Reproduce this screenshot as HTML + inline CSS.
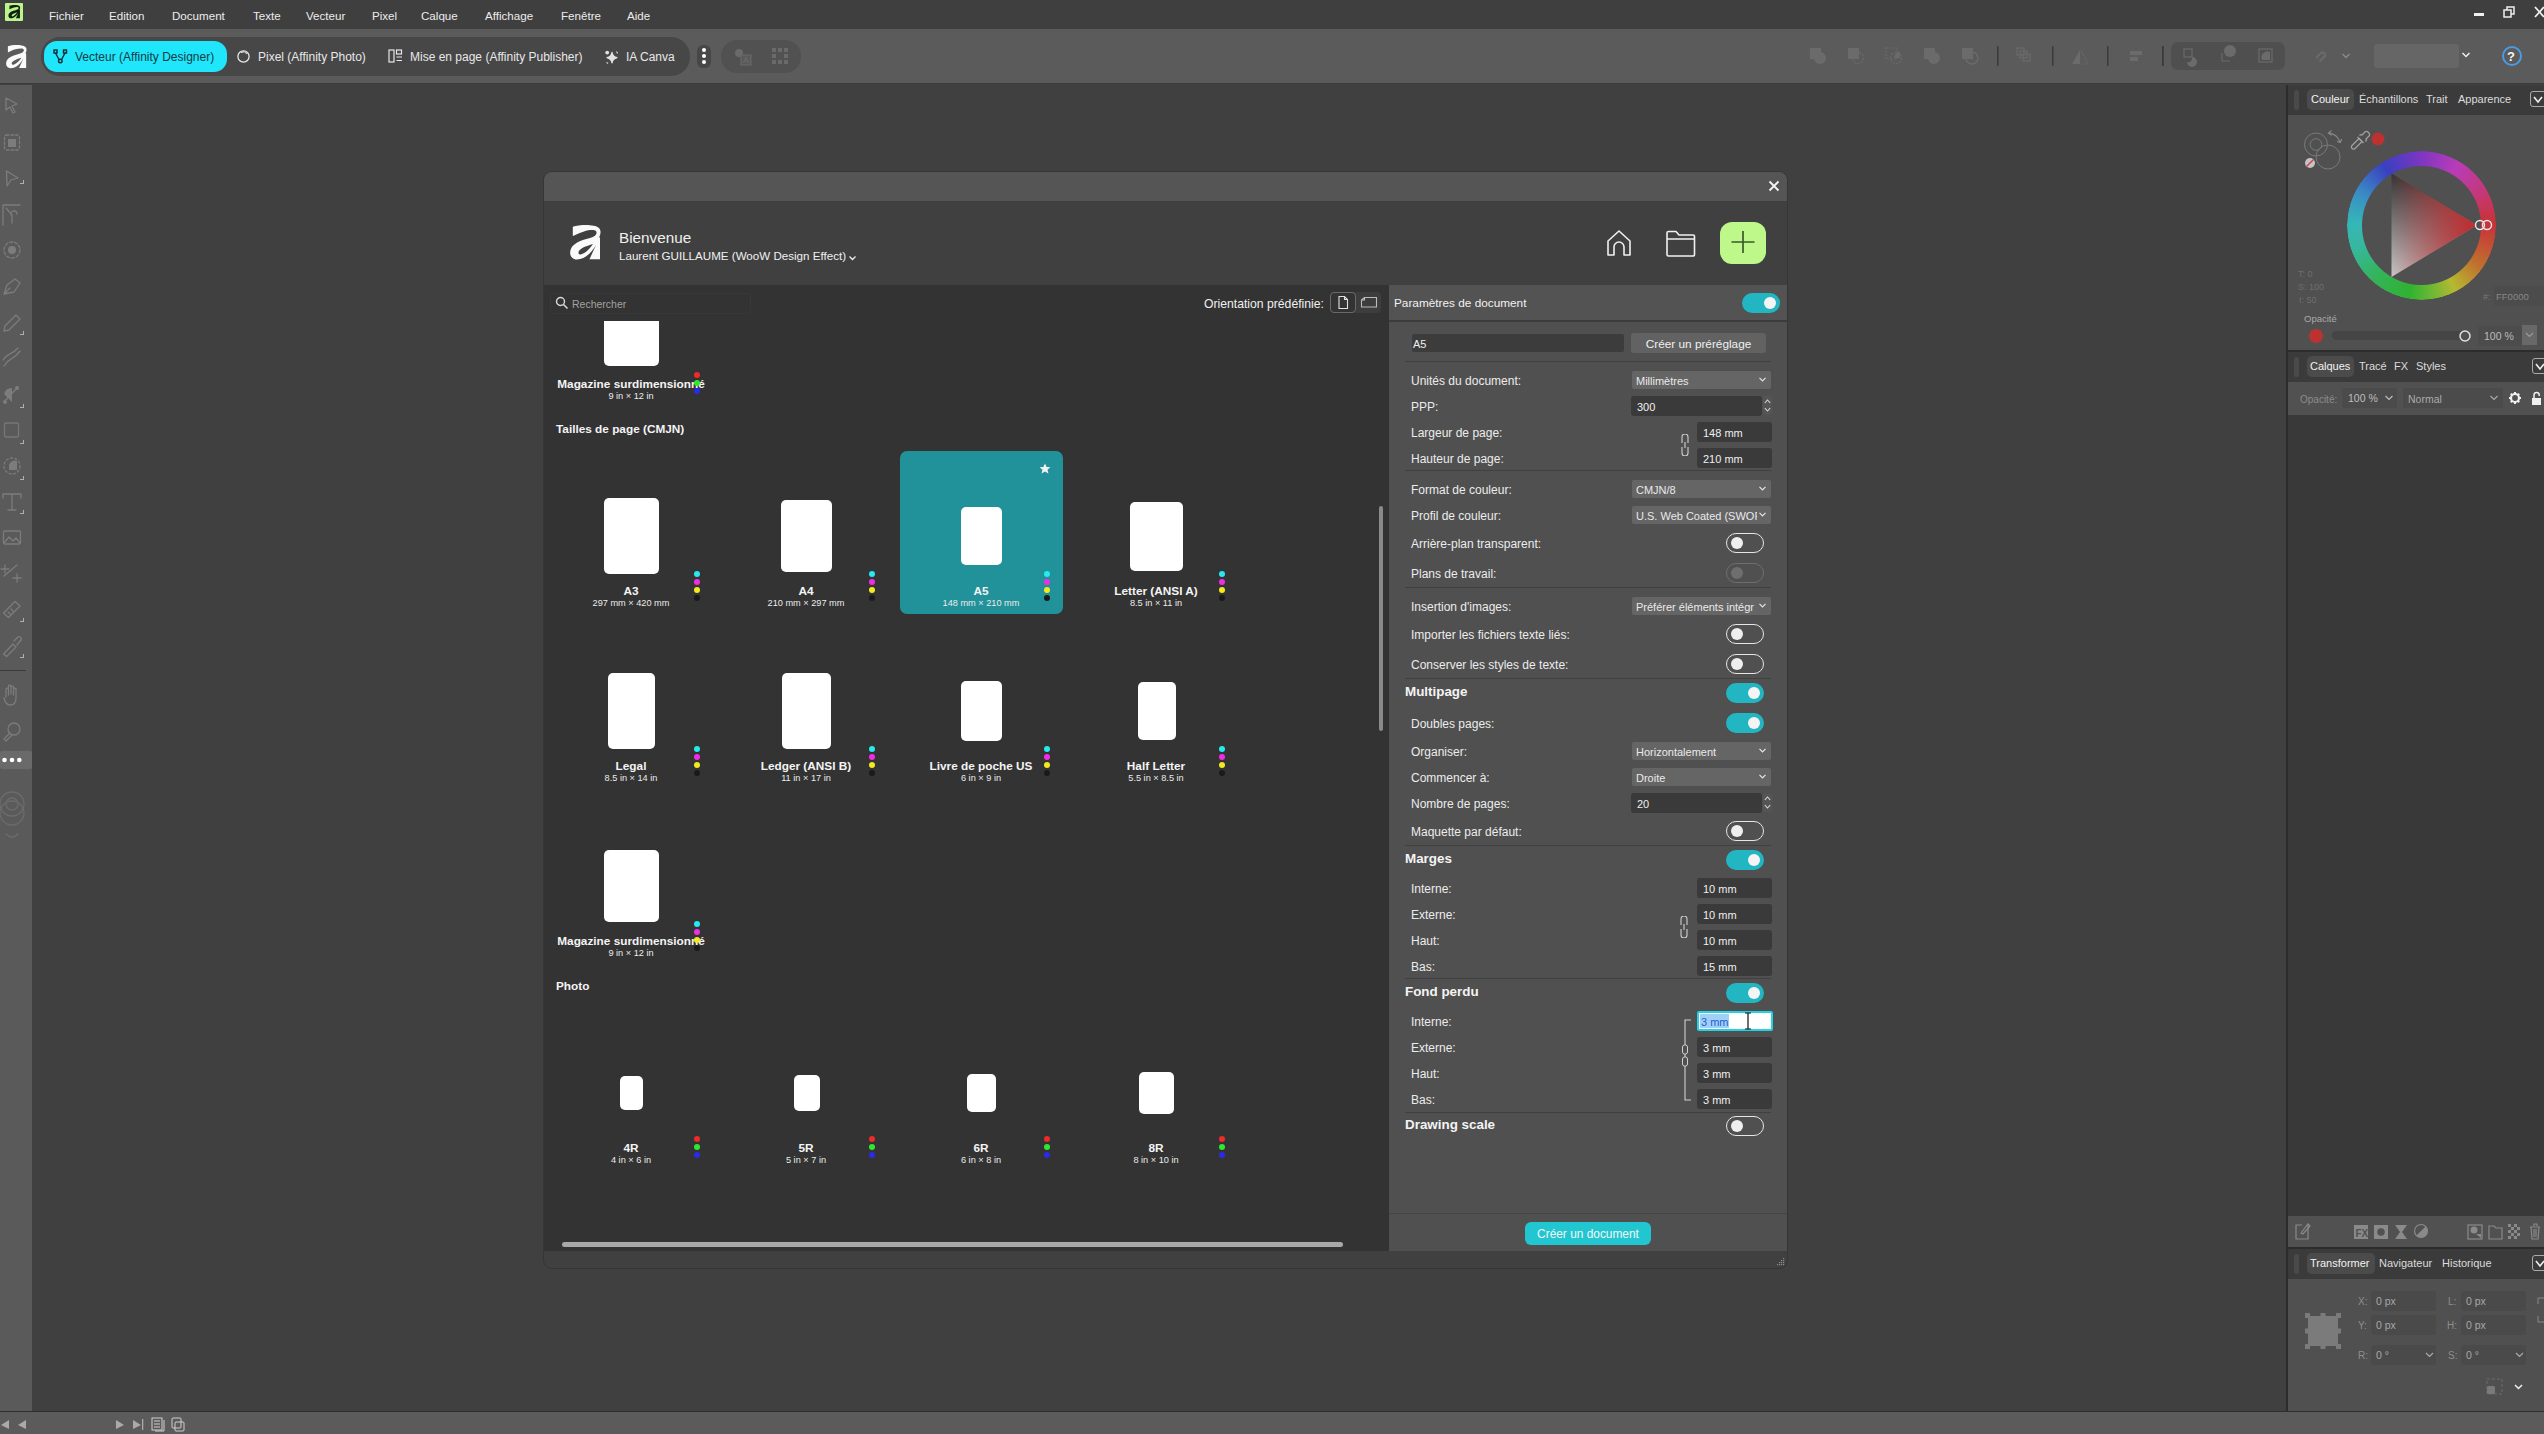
<!DOCTYPE html>
<html><head><meta charset="utf-8">
<style>
*{box-sizing:border-box;margin:0;padding:0}
html,body{width:2544px;height:1434px;overflow:hidden;background:#404040;font-family:"Liberation Sans",sans-serif;color:#e6e6e6}
.a{position:absolute}
.t{position:absolute;white-space:nowrap;line-height:1;padding-top:2px}
</style></head><body>
<!-- MENU BAR -->
<div class="a" style="left:0;top:0;width:2544px;height:29px;background:#3f3f3f"></div>
<div class="a" style="left:5px;top:3px;width:18px;height:18px;background:#b9f58c;border-radius:1px"></div>
<svg class="a" style="left:8px;top:5px" width="12.5" height="13.5" viewBox="0 0 30.5 35"><path fill-rule="evenodd" d="M2.8 1.8 C10 -0.5 24 -1 29 3 C31.5 5.5 30.5 10 29 12.5 L30 12.5 L30 34.2 L19.5 34.2 L26 20 C22 27 15 34.5 7 34.5 C1.5 34.5 -0.5 30 0.3 26 C1.5 19 10 15.5 20 13 C25 11.5 27 9.5 26.5 7 C26 4.5 20 4.5 14 6.5 C9 8 5 10 2.8 11.1 Z M8.5 28 C9 31.5 16 29 23 19 C16 21 8 24 8.5 28 Z" fill="#142010"/></svg>
<div class="t" style="left:49px;top:8px;font-size:11.6px;color:#ececec">Fichier</div>
<div class="t" style="left:109px;top:8px;font-size:11.6px;color:#ececec">Edition</div>
<div class="t" style="left:172px;top:8px;font-size:11.6px;color:#ececec">Document</div>
<div class="t" style="left:253px;top:8px;font-size:11.6px;color:#ececec">Texte</div>
<div class="t" style="left:306px;top:8px;font-size:11.6px;color:#ececec">Vecteur</div>
<div class="t" style="left:372px;top:8px;font-size:11.6px;color:#ececec">Pixel</div>
<div class="t" style="left:421px;top:8px;font-size:11.6px;color:#ececec">Calque</div>
<div class="t" style="left:485px;top:8px;font-size:11.6px;color:#ececec">Affichage</div>
<div class="t" style="left:561px;top:8px;font-size:11.6px;color:#ececec">Fenêtre</div>
<div class="t" style="left:627px;top:8px;font-size:11.6px;color:#ececec">Aide</div>
<!-- window controls -->
<div class="a" style="left:2474px;top:13px;width:10px;height:3px;background:#f0f0f0"></div>
<svg class="a" style="left:2502px;top:5px" width="14" height="14" viewBox="0 0 14 14"><rect x="2" y="5" width="7" height="7" fill="none" stroke="#eee" stroke-width="1.5"/><path d="M5 5 V2 H12 V9 H9" fill="none" stroke="#eee" stroke-width="1.5"/></svg>
<svg class="a" style="left:2533px;top:5px" width="12" height="14" viewBox="0 0 12 14"><path d="M2 2 L11 12 M11 2 L2 12" stroke="#f0f0f0" stroke-width="1.8"/></svg>

<!-- TOOLBAR -->
<div class="a" style="left:0;top:29px;width:2544px;height:54px;background:#5b5b5b"></div>
<div class="a" style="left:0;top:83px;width:2544px;height:1px;background:#3b3b3b"></div>
<svg class="a" style="left:6px;top:45px" width="20.5" height="23.5" viewBox="0 0 30.5 35"><path fill-rule="evenodd" d="M2.8 1.8 C10 -0.5 24 -1 29 3 C31.5 5.5 30.5 10 29 12.5 L30 12.5 L30 34.2 L19.5 34.2 L26 20 C22 27 15 34.5 7 34.5 C1.5 34.5 -0.5 30 0.3 26 C1.5 19 10 15.5 20 13 C25 11.5 27 9.5 26.5 7 C26 4.5 20 4.5 14 6.5 C9 8 5 10 2.8 11.1 Z M8.5 28 C9 31.5 16 29 23 19 C16 21 8 24 8.5 28 Z" fill="#fafafa"/></svg>
<div class="a" style="left:41px;top:37px;width:649px;height:39px;background:#474747;border-radius:19px"></div>
<div class="a" style="left:44px;top:41px;width:183px;height:31px;background:#1fe6fb;border-radius:13px"></div>
<svg class="a" style="left:53px;top:49px" width="15" height="15" viewBox="0 0 15 15"><g fill="none" stroke="#102a30" stroke-width="1.4"><rect x="1" y="1" width="3" height="3"/><rect x="10.5" y="1" width="3" height="3"/><circle cx="7.3" cy="12" r="1.8"/><path d="M2.5 4 L6 10.5 M12 4 L8.6 10.5"/></g></svg>
<div class="t" style="left:75px;top:49px;font-size:12px;color:#123b44">Vecteur (Affinity Designer)</div>
<svg class="a" style="left:236px;top:49px" width="15" height="15" viewBox="0 0 15 15"><circle cx="7.5" cy="7.5" r="5.6" fill="none" stroke="#e8e8e8" stroke-width="1.3"/><path d="M5 3.5 A4.5 4.5 0 0 1 11 5" fill="none" stroke="#e8e8e8" stroke-width="1"/></svg>
<div class="t" style="left:258px;top:49px;font-size:12px;color:#e8e8e8">Pixel (Affinity Photo)</div>
<svg class="a" style="left:388px;top:48px" width="16" height="16" viewBox="0 0 16 16"><g fill="none" stroke="#e8e8e8" stroke-width="1.2"><rect x="1" y="2" width="5" height="12"/><rect x="8.5" y="2" width="5" height="4"/><path d="M8.5 9 H14 M8.5 12.5 H14"/></g></svg>
<div class="t" style="left:410px;top:49px;font-size:12px;color:#e8e8e8">Mise en page (Affinity Publisher)</div>
<svg class="a" style="left:603px;top:48px" width="18" height="18" viewBox="0 0 18 18"><path d="M9 4.3 Q9.6 8.6 14 9.7 Q9.6 10.8 9 15 Q8.4 10.8 4 9.7 Q8.4 8.6 9 4.3Z" fill="#e2e2e2" stroke="#e2e2e2" stroke-width="1.2" stroke-linejoin="round"/><circle cx="4.2" cy="4.6" r="1.9" fill="#e2e2e2"/><path d="M12.8 3 L15 4.6 L14.2 6Z" fill="#e2e2e2"/><path d="M3 14 L5.5 14.8 L4.2 16Z" fill="#e2e2e2"/></svg>
<div class="t" style="left:626px;top:49px;font-size:12px;color:#e8e8e8">IA Canva</div>
<div class="a" style="left:697px;top:45px;width:14px;height:23px;background:#474747;border-radius:6px"></div>
<div class="a" style="left:702px;top:48px;width:4px;height:4px;background:#fff;border-radius:50%"></div>
<div class="a" style="left:702px;top:54px;width:4px;height:4px;background:#fff;border-radius:50%"></div>
<div class="a" style="left:702px;top:60px;width:4px;height:4px;background:#fff;border-radius:50%"></div>
<div class="a" style="left:721px;top:40px;width:80px;height:33px;background:#515151;border-radius:16px"></div>
<svg class="a" style="left:733px;top:47px" width="20" height="20" viewBox="0 0 20 20"><circle cx="6" cy="6" r="4" fill="#6a6a6a"/><rect x="8" y="8" width="10" height="10" fill="#5a5a5a" stroke="#6a6a6a" stroke-width="1"/><path d="M10.5 16 L13 10 L15.5 16 M11.3 14 H14.7" stroke="#6a6a6a" fill="none"/></svg>
<svg class="a" style="left:771px;top:47px" width="18" height="18" viewBox="0 0 18 18"><g fill="#6a6a6a"><rect x="1" y="1" width="4" height="4"/><rect x="7" y="1" width="4" height="4"/><rect x="13" y="1" width="4" height="4"/><rect x="1" y="7" width="4" height="4"/><rect x="13" y="7" width="4" height="4"/><rect x="1" y="13" width="4" height="4"/><rect x="7" y="13" width="4" height="4"/><rect x="13" y="13" width="4" height="4"/></g></svg>
<!-- right toolbar icons (disabled) -->
<g id="rti"></g>
<!-- right toolbar icons -->
<svg class="a" style="left:1806px;top:44px" width="480" height="26" viewBox="1806 44 480 26">
 <g fill="#6b6b6b">
  <rect x="1810" y="48" width="11" height="11"/><circle cx="1820" cy="58" r="6"/>
  <rect x="1848" y="48" width="11" height="11"/>
  <rect x="1924" y="48" width="11" height="11"/><circle cx="1934" cy="58" r="6"/>
  <rect x="1962" y="48" width="11" height="11"/><circle cx="1972" cy="58" r="6" fill="none" stroke="#6b6b6b" stroke-width="1.4"/>
  <path d="M1894 58 A6 6 0 0 1 1900 52 L1900 58Z"/>
  <path d="M2080 50 L2080 64 L2072 64Z"/>
  <rect x="2130" y="51" width="12" height="4"/><rect x="2130" y="57" width="8" height="4"/>
 </g>
 <g fill="none" stroke="#6b6b6b" stroke-width="1.2">
  <circle cx="1858" cy="58" r="5.5" stroke-dasharray="2 1.3"/>
  <rect x="1886" y="48" width="11" height="11" stroke-dasharray="2 1.3"/><circle cx="1896" cy="58" r="5.5" stroke-dasharray="2 1.3"/>
  <rect x="2017" y="48" width="7" height="7"/><rect x="2020" y="51" width="7" height="7"/><rect x="2023" y="54" width="7" height="7"/>
  <path d="M2081 50 L2088 64 L2081 64" stroke-dasharray="1.5 1"/>
 </g>
 <g fill="#3a3a3a"><rect x="1997" y="46" width="1.5" height="20"/><rect x="2052" y="46" width="1.5" height="20"/><rect x="2107" y="46" width="1.5" height="20"/><rect x="2162" y="46" width="1.5" height="20"/><rect x="2162" y="46" width="1.5" height="20"/><rect x="2293" y="46" width="1.5" height="20"/></g>
</svg>
<div class="a" style="left:2171px;top:42px;width:114px;height:28px;background:#4f4f4f;border-radius:7px"></div>
<svg class="a" style="left:2171px;top:42px" width="114" height="28" viewBox="2171 42 114 28">
 <g fill="none" stroke="#6b6b6b" stroke-width="1.2">
  <rect x="2184" y="49" width="8" height="8"/>
  <path d="M2222 53 V61 H2230"/>
  <rect x="2259" y="49" width="13" height="13"/>
 </g>
 <g fill="#6b6b6b"><path d="M2192 57 A5 5 0 1 1 2187 62 A 4 4 0 0 0 2192 57Z"/><circle cx="2230" cy="51" r="6"/><path d="M2262 60 A6 6 0 0 1 2270 52 L2270 60Z"/></g>
</svg>
<svg class="a" style="left:2313px;top:48px" width="16" height="16" viewBox="0 0 16 16"><path d="M3 12 L8 7 A2.5 2.5 0 0 1 11.5 10.5 L6.5 15.5" fill="none" stroke="#6b6b6b" stroke-width="2.2" transform="translate(0,-2)"/></svg>
<svg class="a" style="left:2341px;top:52px" width="10" height="8" viewBox="0 0 10 8"><path d="M1.5 2 L5 5.5 L8.5 2" fill="none" stroke="#8c8c8c" stroke-width="1.3"/></svg>
<div class="a" style="left:2374px;top:44px;width:85px;height:24px;background:#666;border-radius:3px"></div>
<svg class="a" style="left:2461px;top:51px" width="10" height="8" viewBox="0 0 10 8"><path d="M1.5 2 L5 5.5 L8.5 2" fill="none" stroke="#eee" stroke-width="1.5"/></svg>
<div class="a" style="left:2502px;top:46px;width:20px;height:20px;border:2px solid #4a9be3;border-radius:50%"></div>
<div class="t" style="left:2507px;top:48px;font-size:13px;font-weight:700;color:#f4f4f4">?</div>
<!-- LEFT TOOLS -->
<div class="a" style="left:0;top:85px;width:32px;height:1326px;background:#5a5a5a"></div>
<svg class="a" style="left:0;top:85px" width="32" height="760" viewBox="0 85 32 760">
 <g fill="none" stroke="#7c7c7c" stroke-width="1.3" stroke-linejoin="round" stroke-linecap="round">
  <path d="M6 98 L17 104 L12 106 L15 112 L13 113 L10 107 L6 110 Z"/>
  <rect x="4.5" y="135" width="15" height="15" rx="2" stroke-dasharray="2.5 2"/>
  <path d="M6.5 171 L18 178 L11 180 L7 186 Z"/>
  <path d="M3 225 V205 H20 M6 208 L12 215 M12 223 V216 A3 3 0 1 1 17 214"/>
  <circle cx="12" cy="250" r="8" stroke-dasharray="3 2"/>
  <path d="M4 294 L7 285 L15 279 L20 283 L14 292 Z M4 294 L10 288"/>
  <path d="M4 331 L5 326 L16 315 L20 319 L9 330 Z"/>
  <path d="M4 366 C10 356 12 362 20 351 M3 360 C8 352 11 356 18 348"/>
  <path d="M4 402 L18 387"/>
  <rect x="4.5" y="423" width="14" height="14" rx="1.5" stroke="#777"/>
  <circle cx="12" cy="466" r="8" stroke-dasharray="2 2.5"/>
  <path d="M3 498 V494 H21 V498 M12 494 V510 M8 510 H16"/>
  <rect x="3.5" y="531" width="17" height="13" rx="1.5"/><path d="M4 543 L9 537 L13 541 L16 538 L20 543"/>
  <path d="M4 576 L17 565 M5 565 V573 M1 569 H9 M13 578 H21 M17 574 V582"/>
  <path d="M3.5 613 L15 601.5 L20 606 L8.5 617.5 Z M8 612 L10 614 M11 609 L13 611"/>
  <path d="M3.5 654 L13 644 L16 647 L6.5 656.5 Z M14 641 L18 637 A2 2 0 0 1 20 641 L17 645"/>
  <path d="M6 697 V689 A1.3 1.3 0 0 1 8.5 689 V695 M8.5 694 V686 A1.3 1.3 0 0 1 11 686 V694 M11 694 V687 A1.3 1.3 0 0 1 13.5 687 V694 M13.5 695 V689 A1.3 1.3 0 0 1 16 689 V698 C16 703 13 705 10 705 C7 705 5 702 4 698"/>
  <circle cx="14" cy="729" r="6"/><path d="M10 733 L4 739 L6 741 L12 735"/>
  <circle cx="12" cy="804" r="12" stroke="#6c6c6c"/><circle cx="12" cy="804" r="6" stroke="#6c6c6c"/><circle cx="12" cy="813" r="12" stroke="#6c6c6c"/>
  <path d="M6 834 Q12 840 18 834" stroke="#6c6c6c"/>
 </g>
 <g fill="#7c7c7c">
  <rect x="8" y="139" width="8" height="8"/>
  <circle cx="12" cy="250" r="4"/>
  <circle cx="5" cy="402" r="2"/><circle cx="17" cy="388" r="2"/><path d="M4 394 A8 8 0 0 1 12 388 L12 402Z"/>
  <path d="M9 465 A6 6 0 0 1 17 461 V470 H9Z"/>
 </g>
 <g fill="#b0b0b0"><path d="M20 183 h3 v-3 h1 v4 h-4z M20 334 h3 v-3 h1 v4 h-4z M20 407 h3 v-3 h1 v4 h-4z M20 443 h3 v-3 h1 v4 h-4z M20 479 h3 v-3 h1 v4 h-4z M20 513 h3 v-3 h1 v4 h-4z M20 621 h3 v-3 h1 v4 h-4z M20 657 h3 v-3 h1 v4 h-4z"/></g>
 <rect x="0" y="670" width="26" height="1" fill="#3c3c3c"/>
 <rect x="0" y="751" width="32" height="18" rx="2" fill="#6a6a6a"/>
 <g fill="#fff"><circle cx="4.5" cy="760" r="2.3"/><circle cx="12" cy="760" r="2.3"/><circle cx="19.3" cy="760" r="2.3"/></g>
</svg>
<!-- STATUS BAR -->
<div class="a" style="left:0;top:1411px;width:2544px;height:1.5px;background:#2e2e2e"></div>
<div class="a" style="left:0;top:1412px;width:2544px;height:22px;background:#5b5b5b"></div>
<svg class="a" style="left:0;top:1412px" width="200" height="22" viewBox="0 1412 200 22">
 <g fill="#aaa"><path d="M1 1425 L9 1420 L9 1429Z"/><path d="M18 1425 L26 1420 L26 1429Z"/><path d="M116 1420 L124 1425 L116 1429Z"/><path d="M133 1420 L141 1425 L133 1429Z"/><rect x="142" y="1419" width="1.3" height="11"/></g>
 <g fill="none" stroke="#d0d0d0" stroke-width="1"><rect x="152" y="1418" width="10" height="12"/><path d="M164 1420 V1431 H155"/><path d="M154 1421 H160 M154 1424 H160 M154 1427 H160"/><rect x="172" y="1418" width="9" height="10" rx="1"/><rect x="175" y="1422" width="9" height="9" rx="1"/></g>
</svg>
<!-- RIGHT PANEL -->
<div class="a" style="left:2286px;top:85px;width:2px;height:1326px;background:#2c2c2c"></div>
<div class="a" style="left:2288px;top:85px;width:256px;height:30px;background:#3b3b3b"></div>
<div class="a" style="left:2294px;top:90px;width:5px;height:20px;background:#4a4a4a;border-radius:3px"></div>
<div class="a" style="left:2307px;top:89px;width:47px;height:21px;background:#4b4b4b;border-radius:5px"></div>
<div class="t" style="left:2311px;top:92px;font-size:11px;color:#f2f2f2">Couleur</div>
<div class="t" style="left:2359px;top:92px;font-size:11px;color:#dcdcdc">Échantillons</div>
<div class="t" style="left:2426px;top:92px;font-size:11px;color:#dcdcdc">Trait</div>
<div class="t" style="left:2458px;top:92px;font-size:11px;color:#dcdcdc">Apparence</div>
<div class="a" style="left:2530px;top:91px;width:16px;height:16px;border:1.3px solid #aaa;border-radius:3px"></div>
<svg class="a" style="left:2532px;top:95px" width="12" height="10" viewBox="0 0 12 10"><path d="M2 2 L6 7 L10 2" fill="none" stroke="#eee" stroke-width="1.6"/></svg>
<!-- colour content -->
<div class="a" style="left:2288px;top:115px;width:256px;height:235px;background:#505050"></div>
<div class="a" style="left:2347px;top:151px;width:149px;height:149px;border-radius:50%;background:conic-gradient(from 90deg,#c8333a,#c0702e 35deg,#b6b832 62deg,#6ab834 82deg,#30b232 100deg,#34b45a 132deg,#36b8a0 162deg,#35b6b8 182deg,#3a8cc4 208deg,#3a40c0 238deg,#7a36c2 268deg,#b83cb8 300deg,#c43878 332deg,#c8333a 355deg);-webkit-mask:radial-gradient(circle,transparent 59px,#000 60px,#000 74px,transparent 75px)"></div>
<svg class="a" style="left:2288px;top:115px" width="256" height="235" viewBox="2288 115 256 235">
 <defs>
  <linearGradient id="tbw" x1="0" y1="0" x2="0" y2="1"><stop offset="0" stop-color="#333"/><stop offset="1" stop-color="#c8c8c8"/></linearGradient>
  <linearGradient id="tred" x1="2477" y1="225" x2="2391" y2="225" gradientUnits="userSpaceOnUse"><stop offset="0.08" stop-color="#bd3034" stop-opacity="1"/><stop offset="1" stop-color="#bd3034" stop-opacity="0"/></linearGradient>
 </defs>
 <g fill="none" stroke="#7a7a7a" stroke-width="1">
  <circle cx="2316" cy="144.5" r="11.5"/><circle cx="2316" cy="144.5" r="5.8"/><circle cx="2328" cy="157" r="12"/>
 </g>
 <g fill="none" stroke="#8a8a8a" stroke-width="1.2" stroke-linecap="round">
  <path d="M2329 133 Q2337 134 2340 142"/><path d="M2331 131 L2328.5 133.2 L2331.5 135"/><path d="M2337.5 141.5 L2340.2 142.5 L2341.5 139.5"/>
 </g>
 <circle cx="2310" cy="163" r="5" fill="#c4c4c4"/><path d="M2306.5 166.5 L2313.5 159.5" stroke="#d2424a" stroke-width="1.4"/>
 <g fill="none" stroke="#a0a0a0" stroke-width="1.3" stroke-linejoin="round">
  <path d="M2351.5 146 L2359 138.5 L2362 141.5 L2354.5 149 Q2351 149.5 2351.5 146Z"/>
  <path d="M2357.5 137 L2363.5 143 M2359.5 135.5 Q2361 134 2362 135 L2364 133 Q2366 130 2368.5 132.5 Q2371 135 2368 137 L2366 139 Q2367 140 2365.5 141.5"/>
 </g>
 <circle cx="2378" cy="139" r="6.5" fill="#be3131"/>
 <path d="M2391.5 173.5 L2391.5 277 L2477 225.2 Z" fill="url(#tbw)"/>
 <path d="M2391.5 173.5 L2391.5 277 L2477 225.2 Z" fill="url(#tred)"/>
 <g fill="none" stroke="#e8e8e8" stroke-width="1.4"><circle cx="2480" cy="225" r="4.5"/><circle cx="2487" cy="225" r="4.5"/></g>
 <g font-family="Liberation Sans" font-size="9" fill="#6e6e6e"><text x="2298" y="277">T: 0</text><text x="2298" y="290">S: 100</text><text x="2299" y="303">I: 50</text></g>
 <rect x="2494" y="286" width="50" height="20" rx="2" fill="#4c4c4c"/>
 <text x="2483" y="300" font-family="Liberation Sans" font-size="9" fill="#777">#:</text>
 <text x="2496" y="300" font-family="Liberation Sans" font-size="9.5" fill="#888">FF0000</text>
 <text x="2304" y="322" font-family="Liberation Sans" font-size="9.5" fill="#aaa">Opacité</text>
 <circle cx="2316" cy="336" r="7" fill="#be3131"/>
 <rect x="2332" y="331" width="134" height="9" rx="4.5" fill="#454545"/>
 <circle cx="2465" cy="336" r="5" fill="#505050" stroke="#e0e0e0" stroke-width="1.5"/>
 <rect x="2478" y="326" width="44" height="20" rx="2" fill="#4c4c4c"/>
 <text x="2484" y="340" font-family="Liberation Sans" font-size="10.5" fill="#bbb">100 %</text>
 <rect x="2522" y="325" width="15" height="20" fill="#686868"/>
 <path d="M2526 333 L2529.5 336.5 L2533 333" fill="none" stroke="#999" stroke-width="1.2"/>
</svg>
<div class="a" style="left:2288px;top:350px;width:256px;height:2px;background:#2c2c2c"></div>
<!-- layers tab -->
<div class="a" style="left:2288px;top:352px;width:256px;height:30px;background:#3b3b3b"></div>
<div class="a" style="left:2294px;top:357px;width:5px;height:20px;background:#4a4a4a;border-radius:3px"></div>
<div class="a" style="left:2307px;top:356px;width:47px;height:21px;background:#4b4b4b;border-radius:5px"></div>
<div class="t" style="left:2310px;top:359px;font-size:11px;color:#f2f2f2">Calques</div>
<div class="t" style="left:2359px;top:359px;font-size:11px;color:#dcdcdc">Tracé</div>
<div class="t" style="left:2394px;top:359px;font-size:11px;color:#dcdcdc">FX</div>
<div class="t" style="left:2416px;top:359px;font-size:11px;color:#dcdcdc">Styles</div>
<div class="a" style="left:2532px;top:358px;width:16px;height:16px;border:1.3px solid #aaa;border-radius:3px"></div>
<svg class="a" style="left:2534px;top:362px" width="12" height="10" viewBox="0 0 12 10"><path d="M2 2 L6 7 L10 2" fill="none" stroke="#eee" stroke-width="1.6"/></svg>
<div class="a" style="left:2288px;top:382px;width:256px;height:33px;background:#515151"></div>
<div class="t" style="left:2300px;top:393px;font-size:10px;color:#8c8c8c">Opacité:</div>
<div class="a" style="left:2342px;top:388px;width:55px;height:20px;background:#4b4b4b;border-radius:3px"></div>
<div class="t" style="left:2348px;top:391px;font-size:10.5px;color:#bdbdbd">100 %</div>
<svg class="a" style="left:2384px;top:394px" width="10" height="8" viewBox="0 0 10 8"><path d="M1.5 2 L5 5.5 L8.5 2" fill="none" stroke="#bbb" stroke-width="1.2"/></svg>
<div class="a" style="left:2403px;top:388px;width:100px;height:20px;background:#4b4b4b;border-radius:3px"></div>
<div class="t" style="left:2408px;top:392px;font-size:10.5px;color:#aaa">Normal</div>
<svg class="a" style="left:2489px;top:394px" width="10" height="8" viewBox="0 0 10 8"><path d="M1.5 2 L5 5.5 L8.5 2" fill="none" stroke="#aaa" stroke-width="1.2"/></svg>
<svg class="a" style="left:2508px;top:391px" width="14" height="14" viewBox="0 0 14 14"><circle cx="7" cy="7" r="4" fill="none" stroke="#f0f0f0" stroke-width="2.2"/><g stroke="#f0f0f0" stroke-width="2"><path d="M7 1 V3 M7 11 V13 M1 7 H3 M11 7 H13 M2.8 2.8 L4.2 4.2 M9.8 9.8 L11.2 11.2 M2.8 11.2 L4.2 9.8 M9.8 4.2 L11.2 2.8"/></g></svg>
<svg class="a" style="left:2530px;top:390px" width="14" height="16" viewBox="0 0 14 16"><rect x="2" y="8" width="9" height="7" fill="#f0f0f0"/><path d="M4 8 V5 A2.6 2.6 0 0 1 9.2 5 V6" fill="none" stroke="#f0f0f0" stroke-width="1.5"/></svg>
<div class="a" style="left:2288px;top:415px;width:256px;height:801px;background:#393939"></div>
<!-- icons row -->
<div class="a" style="left:2288px;top:1216px;width:256px;height:31px;background:#515151"></div>
<svg class="a" style="left:2288px;top:1216px" width="256" height="31" viewBox="2288 1216 256 31">
 <g fill="none" stroke="#8a8a8a" stroke-width="1.2">
  <path d="M2308 1225 V1239 H2296 V1225 H2302"/><path d="M2301 1233 L2308 1224 L2310 1226 L2303 1234 Z"/>
  <circle cx="2421" cy="1231" r="6.5"/>
  <rect x="2468" y="1225" width="14" height="14"/>
  <path d="M2489 1239 V1226 H2494 L2496 1228 H2502 V1239 Z"/>
  <path d="M2530 1227 H2540 M2534 1226 V1224 H2537 V1226 M2531 1227 L2532 1239 H2538 L2539 1227 M2534 1229 V1237 M2536 1229 V1237"/>
 </g>
 <g fill="#8a8a8a">
  <rect x="2354" y="1225" width="14" height="14"/>
  <rect x="2374" y="1225" width="14" height="14"/>
  <path d="M2395 1225 H2407 L2402 1232 L2407 1239 H2395 L2400 1232Z"/>
  <path d="M2425.6 1226.4 A6.5 6.5 0 0 1 2416.4 1235.6Z"/>
  <circle cx="2474" cy="1230" r="3.5"/><path d="M2476 1234 L2481 1234 L2481 1238 Z"/>
  <g><rect x="2508" y="1224" width="3" height="3"/><rect x="2514" y="1224" width="3" height="3"/><rect x="2511" y="1227" width="3" height="3"/><rect x="2517" y="1227" width="3" height="3"/><rect x="2508" y="1230" width="3" height="3"/><rect x="2514" y="1230" width="3" height="3"/><rect x="2511" y="1233" width="3" height="3"/><rect x="2517" y="1233" width="3" height="3"/><rect x="2508" y="1236" width="3" height="3"/><rect x="2514" y="1236" width="3" height="3"/></g>
 </g>
 <g fill="#515151"><circle cx="2361" cy="1232" r="0"/><circle cx="2381" cy="1232" r="3.8"/></g>
 <text x="2355.5" y="1237" font-family="Liberation Sans" font-size="10" font-weight="700" fill="#515151">FX</text>
</svg>
<div class="a" style="left:2288px;top:1247px;width:256px;height:2px;background:#2c2c2c"></div>
<!-- transform tab -->
<div class="a" style="left:2288px;top:1249px;width:256px;height:30px;background:#3b3b3b"></div>
<div class="a" style="left:2294px;top:1254px;width:5px;height:20px;background:#4a4a4a;border-radius:3px"></div>
<div class="a" style="left:2307px;top:1253px;width:68px;height:21px;background:#4b4b4b;border-radius:5px"></div>
<div class="t" style="left:2310px;top:1256px;font-size:11px;color:#f2f2f2">Transformer</div>
<div class="t" style="left:2379px;top:1256px;font-size:11px;color:#dcdcdc">Navigateur</div>
<div class="t" style="left:2442px;top:1256px;font-size:11px;color:#dcdcdc">Historique</div>
<div class="a" style="left:2532px;top:1255px;width:16px;height:16px;border:1.3px solid #aaa;border-radius:3px"></div>
<svg class="a" style="left:2534px;top:1259px" width="12" height="10" viewBox="0 0 12 10"><path d="M2 2 L6 7 L10 2" fill="none" stroke="#eee" stroke-width="1.6"/></svg>
<div class="a" style="left:2288px;top:1279px;width:256px;height:132px;background:#505050"></div>
<svg class="a" style="left:2288px;top:1279px" width="256" height="132" viewBox="2288 1279 256 132">
 <g fill="#7b7b7b"><rect x="2308" y="1316" width="30" height="30"/><rect x="2305" y="1313" width="5" height="5"/><rect x="2305" y="1328.5" width="5" height="5"/><rect x="2305" y="1344" width="5" height="5"/><rect x="2320.5" y="1313" width="5" height="5"/><rect x="2320.5" y="1344" width="5" height="5"/><rect x="2336" y="1313" width="5" height="5"/><rect x="2336" y="1328.5" width="5" height="5"/><rect x="2336" y="1344" width="5" height="5"/></g>
 <g fill="#4a4a4a"><rect x="2371" y="1291" width="65" height="20" rx="3"/><rect x="2461" y="1291" width="65" height="20" rx="3"/><rect x="2371" y="1315" width="65" height="20" rx="3"/><rect x="2461" y="1315" width="65" height="20" rx="3"/><rect x="2371" y="1345" width="65" height="20" rx="3"/><rect x="2461" y="1345" width="65" height="20" rx="3"/></g>
 <g font-family="Liberation Sans" font-size="10" fill="#8e8e8e"><text x="2358" y="1305">X:</text><text x="2448" y="1305">L:</text><text x="2358" y="1329">Y:</text><text x="2447" y="1329">H:</text><text x="2358" y="1359">R:</text><text x="2448" y="1359">S:</text></g>
 <g font-family="Liberation Sans" font-size="10.5" fill="#a8a8a8"><text x="2376" y="1305">0 px</text><text x="2466" y="1305">0 px</text><text x="2376" y="1329">0 px</text><text x="2466" y="1329">0 px</text><text x="2376" y="1359">0 °</text><text x="2466" y="1359">0 °</text></g>
 <g fill="none" stroke="#aaa" stroke-width="1.2"><path d="M2426 1353 L2429.5 1356.5 L2433 1353 M2516 1353 L2519.5 1356.5 L2523 1353"/></g>
 <g fill="none" stroke="#888" stroke-width="1"><path d="M2538 1304 V1298 H2544 M2538 1316 V1322 H2544"/></g>
 <rect x="2487" y="1379" width="15" height="15" fill="none" stroke="#6d6d6d" stroke-dasharray="3 2"/>
 <rect x="2487" y="1386" width="8" height="8" rx="1.5" fill="#7a7a7a"/>
 <path d="M2515 1385 L2518.5 1388.5 L2522 1385" fill="none" stroke="#f0f0f0" stroke-width="1.5"/>
</svg>
<!-- DIALOG -->
<div class="a" style="left:543px;top:171px;width:1245px;height:1098px;background:#363636;border-radius:9px"></div>
<div class="a" style="left:544px;top:172px;width:1243px;height:1096px;background:#404040;border-radius:8px;overflow:hidden">
  <div class="a" style="left:0;top:0;width:1243px;height:29px;background:#555"></div>
</div>
<svg class="a" style="left:1767px;top:179px" width="14" height="14" viewBox="0 0 14 14"><path d="M2.5 2.5 L11.5 11.5 M11.5 2.5 L2.5 11.5" stroke="#f4f4f4" stroke-width="1.8"/></svg>
<svg class="a" style="left:570px;top:225px" width="30.5" height="35" viewBox="0 0 30.5 35"><path fill-rule="evenodd" d="M2.8 1.8 C10 -0.5 24 -1 29 3 C31.5 5.5 30.5 10 29 12.5 L30 12.5 L30 34.2 L19.5 34.2 L26 20 C22 27 15 34.5 7 34.5 C1.5 34.5 -0.5 30 0.3 26 C1.5 19 10 15.5 20 13 C25 11.5 27 9.5 26.5 7 C26 4.5 20 4.5 14 6.5 C9 8 5 10 2.8 11.1 Z M8.5 28 C9 31.5 16 29 23 19 C16 21 8 24 8.5 28 Z" fill="#fafafa"/></svg>
<div class="t" style="left:619px;top:228px;font-size:15.3px;color:#f0f0f0">Bienvenue</div>
<div class="t" style="left:619px;top:248px;font-size:11.6px;color:#f0f0f0">Laurent GUILLAUME (WooW Design Effect)</div>
<svg class="a" style="left:848px;top:254px" width="9" height="8" viewBox="0 0 9 8"><path d="M1.5 2.5 L4.5 5.5 L7.5 2.5" fill="none" stroke="#eee" stroke-width="1.3"/></svg>
<svg class="a" style="left:1605px;top:228px" width="28" height="30" viewBox="0 0 28 30"><path d="M3 27 V13 L14 3 L25 13 V27 H19 V19 A5 5 0 0 0 9 19 V27 Z" fill="none" stroke="#f0f0f0" stroke-width="1.6" stroke-linejoin="round"/></svg>
<svg class="a" style="left:1665px;top:229px" width="32" height="29" viewBox="0 0 32 29"><path d="M2 25.5 V4 A1.5 1.5 0 0 1 3.5 2.5 H11 L14 6 H28 A1.5 1.5 0 0 1 29.5 7.5 V25.5 A1.5 1.5 0 0 1 28 27 H3.5 A1.5 1.5 0 0 1 2 25.5 Z M2 10 H29.5" fill="none" stroke="#f0f0f0" stroke-width="1.6" stroke-linejoin="round"/></svg>
<div class="a" style="left:1720px;top:222px;width:46px;height:42px;background:#bef78a;border-radius:12px"></div>
<svg class="a" style="left:1720px;top:222px" width="46" height="42" viewBox="0 0 46 42"><path d="M23 9 V31 M11.5 20 H34.5" stroke="#3a5a27" stroke-width="1.7"/></svg>
<div class="a" style="left:544px;top:285px;width:845px;height:966px;background:#333"></div>
<div class="a" style="left:550px;top:293px;width:201px;height:21px;border:1px solid #383838;border-radius:3px"></div>
<svg class="a" style="left:555px;top:296px" width="14" height="14" viewBox="0 0 14 14"><circle cx="5.5" cy="5.5" r="4" fill="none" stroke="#d8d8d8" stroke-width="1.4"/><path d="M8.5 8.5 L12.5 12.5" stroke="#d8d8d8" stroke-width="1.6"/></svg>
<div class="t" style="left:572px;top:297px;font-size:10.5px;color:#a2a2a2">Rechercher</div>
<div class="t" style="left:1204px;top:296px;font-size:12.2px;color:#f0f0f0">Orientation prédéfinie:</div>
<div class="a" style="left:1331px;top:292px;width:50px;height:21px;background:#3d3d3d;border-radius:4px"></div>
<div class="a" style="left:1330px;top:292px;width:26px;height:21px;border:1px solid #6a6a6a;border-radius:4px;background:#333"></div>
<svg class="a" style="left:1336px;top:295px" width="14" height="15" viewBox="0 0 14 15"><path d="M3 1.5 H8.5 L11.5 4.5 V13.5 H3 Z M8.5 1.5 V4.5 H11.5" fill="none" stroke="#e0e0e0" stroke-width="1.1"/></svg>
<svg class="a" style="left:1360px;top:296px" width="18" height="13" viewBox="0 0 18 13"><path d="M1.5 4 L4.5 1.5 H16.5 V11 H1.5 Z M4.5 1.5 V4 H1.5" fill="none" stroke="#bbb" stroke-width="1.1"/></svg>
<div class="a" style="left:604px;top:321px;width:55px;height:45px;background:#fff;border-radius:0 0 5px 5px"></div>
<div class="t" style="left:481px;width:300px;text-align:center;top:376.5px;font-size:11.8px;font-weight:700;color:#f4f4f4">Magazine surdimensionné</div>
<div class="t" style="left:481px;width:300px;text-align:center;top:390px;font-size:9.2px;color:#ececec">9 in × 12 in</div>
<div class="a" style="left:694px;top:372px;width:6px;height:6px;border-radius:50%;background:#ee2a2a"></div>
<div class="a" style="left:694px;top:380px;width:6px;height:6px;border-radius:50%;background:#2ee82e"></div>
<div class="a" style="left:694px;top:388px;width:6px;height:6px;border-radius:50%;background:#2a2ae8"></div>
<div class="t" style="left:556px;top:422px;font-size:11.8px;font-weight:700;color:#f4f4f4">Tailles de page (CMJN)</div>
<div class="a" style="left:900px;top:451px;width:163px;height:163px;background:#22929a;border-radius:7px"></div>
<svg class="a" style="left:1038px;top:462px" width="14" height="14" viewBox="0 0 14 14"><path d="M7 1.5 L8.6 5 L12.4 5.3 L9.5 7.8 L10.4 11.6 L7 9.6 L3.6 11.6 L4.5 7.8 L1.6 5.3 L5.4 5 Z" fill="#f2f2f2"/></svg>
<div class="a" style="left:604px;top:498px;width:55px;height:76px;background:#fff;border-radius:5px"></div>
<div class="t" style="left:481px;width:300px;text-align:center;top:583.5px;font-size:11.8px;font-weight:700;color:#f4f4f4">A3</div>
<div class="t" style="left:481px;width:300px;text-align:center;top:597px;font-size:9.2px;color:#ececec">297 mm × 420 mm</div>
<div class="a" style="left:694px;top:571px;width:6px;height:6px;border-radius:50%;background:#27e9f0"></div>
<div class="a" style="left:694px;top:579px;width:6px;height:6px;border-radius:50%;background:#f02ce8"></div>
<div class="a" style="left:694px;top:587px;width:6px;height:6px;border-radius:50%;background:#f2ea1e"></div>
<div class="a" style="left:694px;top:595px;width:6px;height:6px;border-radius:50%;background:#1a1a1a"></div>
<div class="a" style="left:781px;top:500px;width:51px;height:72px;background:#fff;border-radius:5px"></div>
<div class="t" style="left:656px;width:300px;text-align:center;top:583.5px;font-size:11.8px;font-weight:700;color:#f4f4f4">A4</div>
<div class="t" style="left:656px;width:300px;text-align:center;top:597px;font-size:9.2px;color:#ececec">210 mm × 297 mm</div>
<div class="a" style="left:869px;top:571px;width:6px;height:6px;border-radius:50%;background:#27e9f0"></div>
<div class="a" style="left:869px;top:579px;width:6px;height:6px;border-radius:50%;background:#f02ce8"></div>
<div class="a" style="left:869px;top:587px;width:6px;height:6px;border-radius:50%;background:#f2ea1e"></div>
<div class="a" style="left:869px;top:595px;width:6px;height:6px;border-radius:50%;background:#1a1a1a"></div>
<div class="a" style="left:961px;top:507px;width:41px;height:58px;background:#fff;border-radius:5px"></div>
<div class="t" style="left:831px;width:300px;text-align:center;top:583.5px;font-size:11.8px;font-weight:700;color:#f4f4f4">A5</div>
<div class="t" style="left:831px;width:300px;text-align:center;top:597px;font-size:9.2px;color:#ececec">148 mm × 210 mm</div>
<div class="a" style="left:1044px;top:571px;width:6px;height:6px;border-radius:50%;background:#27e9f0"></div>
<div class="a" style="left:1044px;top:579px;width:6px;height:6px;border-radius:50%;background:#f02ce8"></div>
<div class="a" style="left:1044px;top:587px;width:6px;height:6px;border-radius:50%;background:#f2ea1e"></div>
<div class="a" style="left:1044px;top:595px;width:6px;height:6px;border-radius:50%;background:#1a1a1a"></div>
<div class="a" style="left:1130px;top:502px;width:53px;height:69px;background:#fff;border-radius:5px"></div>
<div class="t" style="left:1006px;width:300px;text-align:center;top:583.5px;font-size:11.8px;font-weight:700;color:#f4f4f4">Letter (ANSI A)</div>
<div class="t" style="left:1006px;width:300px;text-align:center;top:597px;font-size:9.2px;color:#ececec">8.5 in × 11 in</div>
<div class="a" style="left:1219px;top:571px;width:6px;height:6px;border-radius:50%;background:#27e9f0"></div>
<div class="a" style="left:1219px;top:579px;width:6px;height:6px;border-radius:50%;background:#f02ce8"></div>
<div class="a" style="left:1219px;top:587px;width:6px;height:6px;border-radius:50%;background:#f2ea1e"></div>
<div class="a" style="left:1219px;top:595px;width:6px;height:6px;border-radius:50%;background:#1a1a1a"></div>
<div class="a" style="left:608px;top:673px;width:47px;height:76px;background:#fff;border-radius:5px"></div>
<div class="t" style="left:481px;width:300px;text-align:center;top:758.5px;font-size:11.8px;font-weight:700;color:#f4f4f4">Legal</div>
<div class="t" style="left:481px;width:300px;text-align:center;top:772px;font-size:9.2px;color:#ececec">8.5 in × 14 in</div>
<div class="a" style="left:694px;top:746px;width:6px;height:6px;border-radius:50%;background:#27e9f0"></div>
<div class="a" style="left:694px;top:754px;width:6px;height:6px;border-radius:50%;background:#f02ce8"></div>
<div class="a" style="left:694px;top:762px;width:6px;height:6px;border-radius:50%;background:#f2ea1e"></div>
<div class="a" style="left:694px;top:770px;width:6px;height:6px;border-radius:50%;background:#1a1a1a"></div>
<div class="a" style="left:782px;top:673px;width:49px;height:76px;background:#fff;border-radius:5px"></div>
<div class="t" style="left:656px;width:300px;text-align:center;top:758.5px;font-size:11.8px;font-weight:700;color:#f4f4f4">Ledger (ANSI B)</div>
<div class="t" style="left:656px;width:300px;text-align:center;top:772px;font-size:9.2px;color:#ececec">11 in × 17 in</div>
<div class="a" style="left:869px;top:746px;width:6px;height:6px;border-radius:50%;background:#27e9f0"></div>
<div class="a" style="left:869px;top:754px;width:6px;height:6px;border-radius:50%;background:#f02ce8"></div>
<div class="a" style="left:869px;top:762px;width:6px;height:6px;border-radius:50%;background:#f2ea1e"></div>
<div class="a" style="left:869px;top:770px;width:6px;height:6px;border-radius:50%;background:#1a1a1a"></div>
<div class="a" style="left:961px;top:681px;width:41px;height:60px;background:#fff;border-radius:5px"></div>
<div class="t" style="left:831px;width:300px;text-align:center;top:758.5px;font-size:11.8px;font-weight:700;color:#f4f4f4">Livre de poche US</div>
<div class="t" style="left:831px;width:300px;text-align:center;top:772px;font-size:9.2px;color:#ececec">6 in × 9 in</div>
<div class="a" style="left:1044px;top:746px;width:6px;height:6px;border-radius:50%;background:#27e9f0"></div>
<div class="a" style="left:1044px;top:754px;width:6px;height:6px;border-radius:50%;background:#f02ce8"></div>
<div class="a" style="left:1044px;top:762px;width:6px;height:6px;border-radius:50%;background:#f2ea1e"></div>
<div class="a" style="left:1044px;top:770px;width:6px;height:6px;border-radius:50%;background:#1a1a1a"></div>
<div class="a" style="left:1138px;top:682px;width:38px;height:58px;background:#fff;border-radius:5px"></div>
<div class="t" style="left:1006px;width:300px;text-align:center;top:758.5px;font-size:11.8px;font-weight:700;color:#f4f4f4">Half Letter</div>
<div class="t" style="left:1006px;width:300px;text-align:center;top:772px;font-size:9.2px;color:#ececec">5.5 in × 8.5 in</div>
<div class="a" style="left:1219px;top:746px;width:6px;height:6px;border-radius:50%;background:#27e9f0"></div>
<div class="a" style="left:1219px;top:754px;width:6px;height:6px;border-radius:50%;background:#f02ce8"></div>
<div class="a" style="left:1219px;top:762px;width:6px;height:6px;border-radius:50%;background:#f2ea1e"></div>
<div class="a" style="left:1219px;top:770px;width:6px;height:6px;border-radius:50%;background:#1a1a1a"></div>
<div class="a" style="left:604px;top:850px;width:55px;height:72px;background:#fff;border-radius:5px"></div>
<div class="t" style="left:481px;width:300px;text-align:center;top:933.5px;font-size:11.8px;font-weight:700;color:#f4f4f4">Magazine surdimensionné</div>
<div class="t" style="left:481px;width:300px;text-align:center;top:947px;font-size:9.2px;color:#ececec">9 in × 12 in</div>
<div class="a" style="left:694px;top:921px;width:6px;height:6px;border-radius:50%;background:#27e9f0"></div>
<div class="a" style="left:694px;top:929px;width:6px;height:6px;border-radius:50%;background:#f02ce8"></div>
<div class="a" style="left:694px;top:937px;width:6px;height:6px;border-radius:50%;background:#f2ea1e"></div>
<div class="a" style="left:694px;top:945px;width:6px;height:6px;border-radius:50%;background:#1a1a1a"></div>
<div class="t" style="left:556px;top:979px;font-size:11.8px;font-weight:700;color:#f4f4f4">Photo</div>
<div class="a" style="left:620px;top:1076px;width:23px;height:34px;background:#fff;border-radius:5px"></div>
<div class="t" style="left:481px;width:300px;text-align:center;top:1140.5px;font-size:11.8px;font-weight:700;color:#f4f4f4">4R</div>
<div class="t" style="left:481px;width:300px;text-align:center;top:1154px;font-size:9.2px;color:#ececec">4 in × 6 in</div>
<div class="a" style="left:694px;top:1136px;width:6px;height:6px;border-radius:50%;background:#ee2a2a"></div>
<div class="a" style="left:694px;top:1144px;width:6px;height:6px;border-radius:50%;background:#2ee82e"></div>
<div class="a" style="left:694px;top:1152px;width:6px;height:6px;border-radius:50%;background:#2a2ae8"></div>
<div class="a" style="left:794px;top:1075px;width:26px;height:36px;background:#fff;border-radius:5px"></div>
<div class="t" style="left:656px;width:300px;text-align:center;top:1140.5px;font-size:11.8px;font-weight:700;color:#f4f4f4">5R</div>
<div class="t" style="left:656px;width:300px;text-align:center;top:1154px;font-size:9.2px;color:#ececec">5 in × 7 in</div>
<div class="a" style="left:869px;top:1136px;width:6px;height:6px;border-radius:50%;background:#ee2a2a"></div>
<div class="a" style="left:869px;top:1144px;width:6px;height:6px;border-radius:50%;background:#2ee82e"></div>
<div class="a" style="left:869px;top:1152px;width:6px;height:6px;border-radius:50%;background:#2a2ae8"></div>
<div class="a" style="left:967px;top:1074px;width:29px;height:38px;background:#fff;border-radius:5px"></div>
<div class="t" style="left:831px;width:300px;text-align:center;top:1140.5px;font-size:11.8px;font-weight:700;color:#f4f4f4">6R</div>
<div class="t" style="left:831px;width:300px;text-align:center;top:1154px;font-size:9.2px;color:#ececec">6 in × 8 in</div>
<div class="a" style="left:1044px;top:1136px;width:6px;height:6px;border-radius:50%;background:#ee2a2a"></div>
<div class="a" style="left:1044px;top:1144px;width:6px;height:6px;border-radius:50%;background:#2ee82e"></div>
<div class="a" style="left:1044px;top:1152px;width:6px;height:6px;border-radius:50%;background:#2a2ae8"></div>
<div class="a" style="left:1139px;top:1072px;width:35px;height:42px;background:#fff;border-radius:5px"></div>
<div class="t" style="left:1006px;width:300px;text-align:center;top:1140.5px;font-size:11.8px;font-weight:700;color:#f4f4f4">8R</div>
<div class="t" style="left:1006px;width:300px;text-align:center;top:1154px;font-size:9.2px;color:#ececec">8 in × 10 in</div>
<div class="a" style="left:1219px;top:1136px;width:6px;height:6px;border-radius:50%;background:#ee2a2a"></div>
<div class="a" style="left:1219px;top:1144px;width:6px;height:6px;border-radius:50%;background:#2ee82e"></div>
<div class="a" style="left:1219px;top:1152px;width:6px;height:6px;border-radius:50%;background:#2a2ae8"></div>
<div class="a" style="left:562px;top:1242px;width:781px;height:5px;background:#a8a8a8;border-radius:3px"></div>
<div class="a" style="left:1379px;top:506px;width:4px;height:225px;background:#8a8a8a;border-radius:2px"></div>
<svg class="a" style="left:1775px;top:1257px" width="10" height="10" viewBox="0 0 10 10"><g fill="#8a8a8a"><rect x="8" y="1" width="1.2" height="1.2"/><rect x="6" y="3" width="1.2" height="1.2"/><rect x="8" y="3" width="1.2" height="1.2"/><rect x="4" y="5" width="1.2" height="1.2"/><rect x="6" y="5" width="1.2" height="1.2"/><rect x="8" y="5" width="1.2" height="1.2"/><rect x="2" y="7" width="1.2" height="1.2"/><rect x="4" y="7" width="1.2" height="1.2"/><rect x="6" y="7" width="1.2" height="1.2"/><rect x="8" y="7" width="1.2" height="1.2"/></g></svg>
<div class="a" style="left:1389px;top:285px;width:398px;height:966px;background:#505050"></div>
<div class="a" style="left:1389px;top:285px;width:398px;height:35px;background:#535353"></div>
<div class="a" style="left:1389px;top:320px;width:398px;height:1.5px;background:#3c3c3c"></div>
<div class="t" style="left:1394px;top:296px;font-size:11.8px;color:#f2f2f2">Paramètres de document</div>
<div class="a" style="left:1742px;top:293px;width:38px;height:20px;background:#22b6c2;border-radius:10px"></div>
<div class="a" style="left:1764px;top:297px;width:12px;height:12px;background:#f4f4f4;border-radius:50%"></div>
<div class="a" style="left:1412px;top:334px;width:212px;height:18px;background:#3c3c3c;border-radius:2px"></div>
<div class="t" style="left:1413px;top:337px;font-size:11px;color:#f0f0f0">A5</div>
<div class="a" style="left:1631px;top:333px;width:135px;height:20px;background:#626262;border-radius:3px"></div>
<div class="t" style="left:1631px;width:135px;text-align:center;top:337px;font-size:11.8px;color:#f0f0f0">Créer un préréglage</div>
<div class="a" style="left:1405px;top:361px;width:366px;height:1px;background:#404040"></div>
<div class="t" style="left:1411px;top:373px;font-size:12px;color:#ececec">Unités du document:</div>
<div class="a" style="left:1632px;top:371px;width:139px;height:18px;background:#656565;border-radius:2px"></div>
<div class="t" style="left:1636px;top:374px;width:121px;overflow:hidden;font-size:11px;color:#eaeaea">Millimètres</div>
<svg class="a" style="left:1758px;top:376px" width="9" height="7" viewBox="0 0 9 7"><path d="M1.5 1.8 L4.5 4.8 L7.5 1.8" fill="none" stroke="#e6e6e6" stroke-width="1.2"/></svg>
<div class="t" style="left:1411px;top:399px;font-size:12px;color:#ececec">PPP:</div>
<div class="a" style="left:1631px;top:396px;width:131px;height:20px;background:#3a3a3a;border-radius:3px"></div>
<div class="t" style="left:1637px;top:400px;font-size:11px;color:#efefef">300</div>
<div class="a" style="left:1763px;top:396px;width:9px;height:19px;background:#555;border-radius:2px"></div>
<svg class="a" style="left:1763px;top:397px" width="9" height="17" viewBox="0 0 9 17"><path d="M1.8 6 L4.5 3 L7.2 6 M1.8 11 L4.5 14 L7.2 11" fill="none" stroke="#d8d8d8" stroke-width="1.1"/></svg>
<div class="t" style="left:1411px;top:425px;font-size:12px;color:#ececec">Largeur de page:</div>
<div class="a" style="left:1697px;top:422px;width:75px;height:20px;background:#3a3a3a;border-radius:3px"></div>
<div class="t" style="left:1703px;top:426px;font-size:11px;color:#efefef">148 mm</div>
<div class="t" style="left:1411px;top:451px;font-size:12px;color:#ececec">Hauteur de page:</div>
<div class="a" style="left:1697px;top:448px;width:75px;height:20px;background:#3a3a3a;border-radius:3px"></div>
<div class="t" style="left:1703px;top:452px;font-size:11px;color:#efefef">210 mm</div>
<svg class="a" style="left:1680px;top:434px" width="10" height="22" viewBox="0 0 10 22"><path d="M2 9 V3 A2.5 2.5 0 0 1 8 3 V9 M2 13 V19 A2.5 2.5 0 0 0 8 19 V13 M5 8 V14" fill="none" stroke="#cfcfcf" stroke-width="1.1"/></svg>
<div class="a" style="left:1405px;top:470px;width:366px;height:1px;background:#404040"></div>
<div class="t" style="left:1411px;top:482px;font-size:12px;color:#ececec">Format de couleur:</div>
<div class="a" style="left:1632px;top:480px;width:139px;height:18px;background:#656565;border-radius:2px"></div>
<div class="t" style="left:1636px;top:483px;width:121px;overflow:hidden;font-size:11px;color:#eaeaea">CMJN/8</div>
<svg class="a" style="left:1758px;top:485px" width="9" height="7" viewBox="0 0 9 7"><path d="M1.5 1.8 L4.5 4.8 L7.5 1.8" fill="none" stroke="#e6e6e6" stroke-width="1.2"/></svg>
<div class="t" style="left:1411px;top:508px;font-size:12px;color:#ececec">Profil de couleur:</div>
<div class="a" style="left:1632px;top:506px;width:139px;height:18px;background:#656565;border-radius:2px"></div>
<div class="t" style="left:1636px;top:509px;width:121px;overflow:hidden;font-size:11px;color:#eaeaea">U.S. Web Coated (SWOP</div>
<svg class="a" style="left:1758px;top:511px" width="9" height="7" viewBox="0 0 9 7"><path d="M1.5 1.8 L4.5 4.8 L7.5 1.8" fill="none" stroke="#e6e6e6" stroke-width="1.2"/></svg>
<div class="t" style="left:1411px;top:536px;font-size:12px;color:#ececec">Arrière-plan transparent:</div>
<div class="a" style="left:1726px;top:533px;width:38px;height:20px;border:1.6px solid #e6e6e6;border-radius:10px"></div>
<div class="a" style="left:1731px;top:537px;width:12px;height:12px;background:#efefef;border-radius:50%"></div>
<div class="t" style="left:1411px;top:566px;font-size:12px;color:#ececec">Plans de travail:</div>
<div class="a" style="left:1726px;top:563px;width:38px;height:20px;border:1.5px solid #6e6e6e;border-radius:10px"></div>
<div class="a" style="left:1731px;top:567px;width:12px;height:12px;background:#6e6e6e;border-radius:50%"></div>
<div class="a" style="left:1405px;top:587px;width:366px;height:1px;background:#404040"></div>
<div class="t" style="left:1411px;top:599px;font-size:12px;color:#ececec">Insertion d'images:</div>
<div class="a" style="left:1632px;top:597px;width:139px;height:18px;background:#656565;border-radius:2px"></div>
<div class="t" style="left:1636px;top:600px;width:121px;overflow:hidden;font-size:11px;color:#eaeaea">Préférer éléments intégr</div>
<svg class="a" style="left:1758px;top:602px" width="9" height="7" viewBox="0 0 9 7"><path d="M1.5 1.8 L4.5 4.8 L7.5 1.8" fill="none" stroke="#e6e6e6" stroke-width="1.2"/></svg>
<div class="t" style="left:1411px;top:627px;font-size:12px;color:#ececec">Importer les fichiers texte liés:</div>
<div class="a" style="left:1726px;top:624px;width:38px;height:20px;border:1.6px solid #e6e6e6;border-radius:10px"></div>
<div class="a" style="left:1731px;top:628px;width:12px;height:12px;background:#efefef;border-radius:50%"></div>
<div class="t" style="left:1411px;top:657px;font-size:12px;color:#ececec">Conserver les styles de texte:</div>
<div class="a" style="left:1726px;top:654px;width:38px;height:20px;border:1.6px solid #e6e6e6;border-radius:10px"></div>
<div class="a" style="left:1731px;top:658px;width:12px;height:12px;background:#efefef;border-radius:50%"></div>
<div class="a" style="left:1405px;top:678px;width:366px;height:1px;background:#404040"></div>
<div class="t" style="left:1405px;top:683px;font-size:13.4px;font-weight:700;color:#f4f4f4">Multipage</div>
<div class="a" style="left:1726px;top:683px;width:38px;height:20px;background:#22b6c2;border-radius:10px"></div>
<div class="a" style="left:1748px;top:687px;width:12px;height:12px;background:#f4f4f4;border-radius:50%"></div>
<div class="t" style="left:1411px;top:716px;font-size:12px;color:#ececec">Doubles pages:</div>
<div class="a" style="left:1726px;top:713px;width:38px;height:20px;background:#22b6c2;border-radius:10px"></div>
<div class="a" style="left:1748px;top:717px;width:12px;height:12px;background:#f4f4f4;border-radius:50%"></div>
<div class="t" style="left:1411px;top:744px;font-size:12px;color:#ececec">Organiser:</div>
<div class="a" style="left:1632px;top:742px;width:139px;height:18px;background:#656565;border-radius:2px"></div>
<div class="t" style="left:1636px;top:745px;width:121px;overflow:hidden;font-size:11px;color:#eaeaea">Horizontalement</div>
<svg class="a" style="left:1758px;top:747px" width="9" height="7" viewBox="0 0 9 7"><path d="M1.5 1.8 L4.5 4.8 L7.5 1.8" fill="none" stroke="#e6e6e6" stroke-width="1.2"/></svg>
<div class="t" style="left:1411px;top:770px;font-size:12px;color:#ececec">Commencer à:</div>
<div class="a" style="left:1632px;top:768px;width:139px;height:18px;background:#656565;border-radius:2px"></div>
<div class="t" style="left:1636px;top:771px;width:121px;overflow:hidden;font-size:11px;color:#eaeaea">Droite</div>
<svg class="a" style="left:1758px;top:773px" width="9" height="7" viewBox="0 0 9 7"><path d="M1.5 1.8 L4.5 4.8 L7.5 1.8" fill="none" stroke="#e6e6e6" stroke-width="1.2"/></svg>
<div class="t" style="left:1411px;top:796px;font-size:12px;color:#ececec">Nombre de pages:</div>
<div class="a" style="left:1631px;top:793px;width:131px;height:20px;background:#3a3a3a;border-radius:3px"></div>
<div class="t" style="left:1637px;top:797px;font-size:11px;color:#efefef">20</div>
<div class="a" style="left:1763px;top:793px;width:9px;height:19px;background:#555;border-radius:2px"></div>
<svg class="a" style="left:1763px;top:794px" width="9" height="17" viewBox="0 0 9 17"><path d="M1.8 6 L4.5 3 L7.2 6 M1.8 11 L4.5 14 L7.2 11" fill="none" stroke="#d8d8d8" stroke-width="1.1"/></svg>
<div class="t" style="left:1411px;top:824px;font-size:12px;color:#ececec">Maquette par défaut:</div>
<div class="a" style="left:1726px;top:821px;width:38px;height:20px;border:1.6px solid #e6e6e6;border-radius:10px"></div>
<div class="a" style="left:1731px;top:825px;width:12px;height:12px;background:#efefef;border-radius:50%"></div>
<div class="a" style="left:1405px;top:845px;width:366px;height:1px;background:#404040"></div>
<div class="t" style="left:1405px;top:850px;font-size:13.4px;font-weight:700;color:#f4f4f4">Marges</div>
<div class="a" style="left:1726px;top:850px;width:38px;height:20px;background:#22b6c2;border-radius:10px"></div>
<div class="a" style="left:1748px;top:854px;width:12px;height:12px;background:#f4f4f4;border-radius:50%"></div>
<div class="t" style="left:1411px;top:881px;font-size:12px;color:#ececec">Interne:</div>
<div class="a" style="left:1697px;top:878px;width:75px;height:20px;background:#3a3a3a;border-radius:3px"></div>
<div class="t" style="left:1703px;top:882px;font-size:11px;color:#efefef">10 mm</div>
<div class="t" style="left:1411px;top:907px;font-size:12px;color:#ececec">Externe:</div>
<div class="a" style="left:1697px;top:904px;width:75px;height:20px;background:#3a3a3a;border-radius:3px"></div>
<div class="t" style="left:1703px;top:908px;font-size:11px;color:#efefef">10 mm</div>
<div class="t" style="left:1411px;top:933px;font-size:12px;color:#ececec">Haut:</div>
<div class="a" style="left:1697px;top:930px;width:75px;height:20px;background:#3a3a3a;border-radius:3px"></div>
<div class="t" style="left:1703px;top:934px;font-size:11px;color:#efefef">10 mm</div>
<div class="t" style="left:1411px;top:959px;font-size:12px;color:#ececec">Bas:</div>
<div class="a" style="left:1697px;top:956px;width:75px;height:20px;background:#3a3a3a;border-radius:3px"></div>
<div class="t" style="left:1703px;top:960px;font-size:11px;color:#efefef">15 mm</div>
<svg class="a" style="left:1679px;top:916px" width="10" height="22" viewBox="0 0 10 22"><path d="M2 9 V3 A2.5 2.5 0 0 1 8 3 V9 M2 13 V19 A2.5 2.5 0 0 0 8 19 V13 M5 8 V14" fill="none" stroke="#cfcfcf" stroke-width="1.1"/></svg>
<div class="a" style="left:1405px;top:978px;width:366px;height:1px;background:#404040"></div>
<div class="t" style="left:1405px;top:983px;font-size:13.4px;font-weight:700;color:#f4f4f4">Fond perdu</div>
<div class="a" style="left:1726px;top:983px;width:38px;height:20px;background:#22b6c2;border-radius:10px"></div>
<div class="a" style="left:1748px;top:987px;width:12px;height:12px;background:#f4f4f4;border-radius:50%"></div>
<div class="t" style="left:1411px;top:1014px;font-size:12px;color:#ececec">Interne:</div>
<div class="a" style="left:1697px;top:1011px;width:76px;height:20px;background:#fff;border:2px solid #22d2e6;border-radius:2px"></div>
<div class="a" style="left:1700px;top:1014px;width:29px;height:14px;background:#9fd0f7"></div>
<div class="t" style="left:1701px;top:1015px;font-size:11px;color:#2a5bd0">3 mm</div>
<svg class="a" style="left:1744px;top:1012px" width="8" height="18" viewBox="0 0 8 18"><path d="M1 1 H7 M4 1 V17 M1 17 H7" stroke="#111" stroke-width="1.2" fill="none"/></svg>
<div class="t" style="left:1411px;top:1040px;font-size:12px;color:#ececec">Externe:</div>
<div class="a" style="left:1697px;top:1037px;width:75px;height:20px;background:#3a3a3a;border-radius:3px"></div>
<div class="t" style="left:1703px;top:1041px;font-size:11px;color:#efefef">3 mm</div>
<div class="t" style="left:1411px;top:1066px;font-size:12px;color:#ececec">Haut:</div>
<div class="a" style="left:1697px;top:1063px;width:75px;height:20px;background:#3a3a3a;border-radius:3px"></div>
<div class="t" style="left:1703px;top:1067px;font-size:11px;color:#efefef">3 mm</div>
<div class="t" style="left:1411px;top:1092px;font-size:12px;color:#ececec">Bas:</div>
<div class="a" style="left:1697px;top:1089px;width:75px;height:20px;background:#3a3a3a;border-radius:3px"></div>
<div class="t" style="left:1703px;top:1093px;font-size:11px;color:#efefef">3 mm</div>
<svg class="a" style="left:1680px;top:1018px" width="14" height="84" viewBox="0 0 14 84"><path d="M11 2 H5 V82 H11" fill="none" stroke="#d0d0d0" stroke-width="1.1"/><rect x="2.5" y="27" width="5" height="9" rx="2" fill="#505050" stroke="#d0d0d0" stroke-width="1"/><rect x="2.5" y="39" width="5" height="9" rx="2" fill="#505050" stroke="#d0d0d0" stroke-width="1"/></svg>
<div class="a" style="left:1405px;top:1112px;width:366px;height:1px;background:#404040"></div>
<div class="t" style="left:1405px;top:1116px;font-size:13.4px;font-weight:700;color:#f4f4f4">Drawing scale</div>
<div class="a" style="left:1726px;top:1116px;width:38px;height:20px;border:1.6px solid #e6e6e6;border-radius:10px"></div>
<div class="a" style="left:1731px;top:1120px;width:12px;height:12px;background:#efefef;border-radius:50%"></div>
<div class="a" style="left:1389px;top:1213px;width:398px;height:1px;background:#444"></div>
<div class="a" style="left:1525px;top:1222px;width:126px;height:23px;background:#21c6d1;border-radius:6px"></div>
<div class="t" style="left:1525px;width:126px;text-align:center;top:1227px;font-size:11.9px;color:#f6f6f6">Créer un document</div></body></html>
